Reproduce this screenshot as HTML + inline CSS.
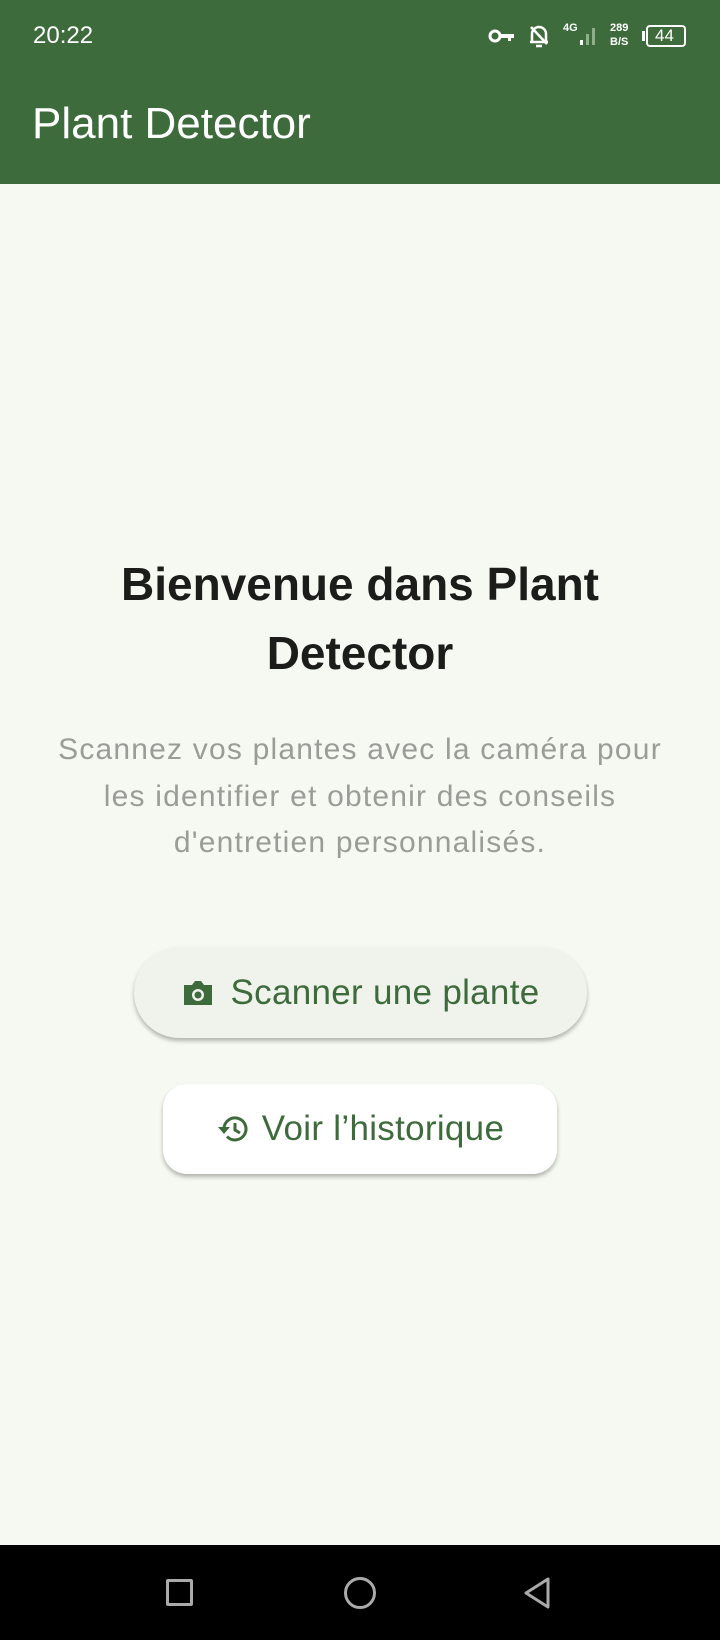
<!DOCTYPE html>
<html><head><meta charset="utf-8"><style>
*{margin:0;padding:0;box-sizing:border-box}
body{width:720px;height:1640px;background:#f6f9f1;font-family:"Liberation Sans",Roboto,sans-serif;position:relative;overflow:hidden}
.top{position:absolute;left:0;top:0;width:720px;height:184px;background:#3e6b3b;color:#fff}
.time{position:absolute;left:33px;top:22px;font-size:24px}
.title{position:absolute;left:32px;top:99px;font-size:44px}
.h{position:absolute;left:0;width:720px;text-align:center;font-weight:bold;font-size:46px;color:#1c1d1a;line-height:69px;top:550px}
.p{position:absolute;left:0;width:720px;text-align:center;font-size:30px;letter-spacing:1.2px;color:#9a9c98;line-height:46.5px;top:727px}
.b1{position:absolute;left:134px;top:947px;width:453px;height:91px;border-radius:46px;background:#f0f3ec;box-shadow:0 3px 4px rgba(0,0,0,.28);display:flex;align-items:center;justify-content:center;color:#3e6b3b;font-size:35px;letter-spacing:0.3px}
.b2{position:absolute;left:163px;top:1084px;width:394px;height:90px;border-radius:24px;background:#fff;box-shadow:0 3px 4px rgba(0,0,0,.28);display:flex;align-items:center;justify-content:center;color:#3e6b3b;font-size:35px;letter-spacing:0.3px}
.nav{position:absolute;left:0;top:1545px;width:720px;height:95px;background:#000}
</style></head><body>
<div class="top">
<div class="time">20:22</div>
<svg style="position:absolute;left:488px;top:28px" width="28" height="16" viewBox="0 0 28 16"><circle cx="7" cy="8" r="5" fill="none" stroke="#fff" stroke-width="3"/><path d="M12 6h14v4h-3v3h-3v-3h-8z" fill="#fff"/></svg>
<svg style="position:absolute;left:528px;top:24px" width="22" height="24" viewBox="0 0 22 24"><path d="M4 18V10a7 7 0 0 1 14 0v8h2M2 18h16" fill="none" stroke="#fff" stroke-width="2.5"/><path d="M8 22h6M3 3l16 17" stroke="#fff" stroke-width="2.5"/></svg>
<div style="position:absolute;left:563px;top:22px;color:#fff;font-size:11px;font-weight:bold">4G</div>
<svg style="position:absolute;left:566px;top:24px" width="36" height="24"><rect x="14" y="16" width="3" height="5" fill="#fff"/><rect x="20" y="10" width="3" height="11" fill="#8fae8c"/><rect x="26" y="4" width="3" height="17" fill="#8fae8c"/></svg>
<div style="position:absolute;left:610px;top:21px;color:#fff;font-size:11px;font-weight:bold;line-height:14px;text-align:center">289<br>B/S</div>
<div style="position:absolute;left:646px;top:25px;width:40px;height:22px;border:2px solid #fff;border-radius:4px;color:#fff;font-size:17px;line-height:18px;padding-left:7px">44</div>
<div style="position:absolute;left:642px;top:31px;width:3px;height:10px;background:#fff"></div>
<div class="title">Plant Detector</div>
</div>
<div class="h">Bienvenue dans Plant<br>Detector</div>
<div class="p">Scannez vos plantes avec la caméra pour<br>les identifier et obtenir des conseils<br>d'entretien personnalisés.</div>
<div class="b1"><svg width="32" height="28" viewBox="0 0 32 28" style="margin-right:17px"><path d="M2 6h8l3-4h6l3 4h8v20H2z" fill="#3e6b3b"/><circle cx="16" cy="16" r="6" fill="#f0f3ec"/><circle cx="16" cy="16" r="3.5" fill="#3e6b3b"/></svg>Scanner une plante</div>
<div class="b2"><svg width="32" height="30" viewBox="0 0 32 30" style="margin-right:14px"><path d="M8 15a11 11 0 1 1 3 7.5" fill="none" stroke="#3e6b3b" stroke-width="3"/><path d="M2 13h12l-6 7z" fill="#3e6b3b"/><path d="M19 9v7l5 3" fill="none" stroke="#3e6b3b" stroke-width="3"/></svg>Voir l’historique</div>
<div class="nav">
<div style="position:absolute;left:166px;top:34px;width:27px;height:27px;border:3px solid #aaa;border-radius:2px"></div>
<div style="position:absolute;left:344px;top:32px;width:32px;height:32px;border:3px solid #aaa;border-radius:50%"></div>
<svg style="position:absolute;left:522px;top:31px" width="30" height="34"><path d="M26 3L4 17l22 14z" fill="none" stroke="#aaa" stroke-width="3" stroke-linejoin="round"/></svg>
</div>
</body></html>
